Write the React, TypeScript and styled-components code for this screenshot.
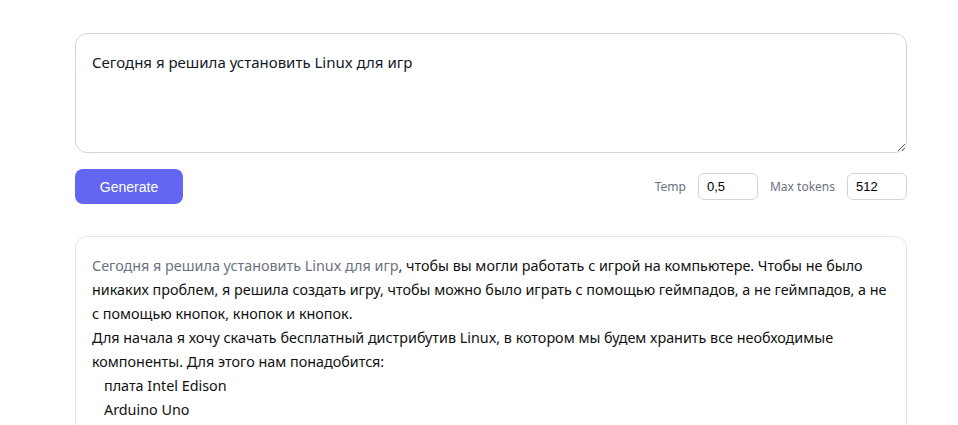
import React from "react";
import styled, { createGlobalStyle } from "styled-components";

const Global = createGlobalStyle`
  html, body { margin: 0; padding: 0; background: #ffffff; }
  body { font-family: "Noto Sans", "Open Sans", sans-serif; color: #111827; }
`;

const Page = styled.main`
  width: 832px;
  padding: 33px 0 0 75px;
  display: flex;
  flex-direction: column;
`;

const Prompt = styled.textarea`
  box-sizing: border-box;
  width: 100%;
  height: 120px;
  padding: 16px;
  border: 1px solid #d1d5db;
  border-radius: 12px;
  font-family: "Noto Sans", "Open Sans", sans-serif;
  font-size: 15px;
  line-height: 24px;
  color: #111827;
  resize: vertical;
  outline: none;
  margin: 0;
`;

const Toolbar = styled.div`
  display: flex;
  align-items: center;
  justify-content: space-between;
  margin-top: 16px;
`;

const GenerateButton = styled.button`
  width: 108px;
  height: 35px;
  border: none;
  border-radius: 8px;
  background: #6366f1;
  color: #ffffff;
  font-family: "Liberation Sans", Arial, sans-serif;
  font-size: 14px;
  cursor: pointer;
`;

const Params = styled.div`
  display: flex;
  align-items: center;
  gap: 12px;
`;

const Label = styled.label`
  font-size: 12px;
  color: #6b7280;
`;

const NumInput = styled.input`
  box-sizing: border-box;
  width: 60px;
  height: 27px;
  padding: 0 8px;
  border: 1px solid #d1d5db;
  border-radius: 6px;
  font-family: "Liberation Sans", Arial, sans-serif;
  font-size: 13px;
  color: #000;
  outline: none;
`;

const Output = styled.section`
  box-sizing: border-box;
  margin-top: 32px;
  padding: 17px 16px 16px;
  border: 1px solid #e5e7eb;
  border-radius: 12px;
  font-size: 14.35px;
  line-height: 24px;
  color: #111111;
`;

const Paragraph = styled.div`
  white-space: pre-wrap;
`;

const PromptPart = styled.span`
  color: #6b7280;
`;

const ListItem = styled.div`
  padding-left: 12px;
`;

export default function App() {
  return (
    <>
      <Global />
      <Page>
        <Prompt defaultValue="Сегодня я решила установить Linux для игр" />
        <Toolbar>
          <GenerateButton>Generate</GenerateButton>
          <Params>
            <Label>Temp</Label>
            <NumInput defaultValue="0,5" />
            <Label>Max tokens</Label>
            <NumInput defaultValue="512" />
          </Params>
        </Toolbar>
        <Output>
          <Paragraph>
            <PromptPart>Сегодня я решила установить Linux для игр</PromptPart>
            {", чтобы вы могли работать с игрой на компьютере. Чтобы не было никаких проблем, я решила создать игру, чтобы можно было играть с помощью геймпадов, а не геймпадов, а не с помощью кнопок, кнопок и кнопок."}
          </Paragraph>
          <Paragraph>Для начала я хочу скачать бесплатный дистрибутив Linux, в котором мы будем хранить все необходимые компоненты. Для этого нам понадобится:</Paragraph>
          <ListItem>плата Intel Edison</ListItem>
          <ListItem>Arduino Uno</ListItem>
        </Output>
      </Page>
    </>
  );
}
